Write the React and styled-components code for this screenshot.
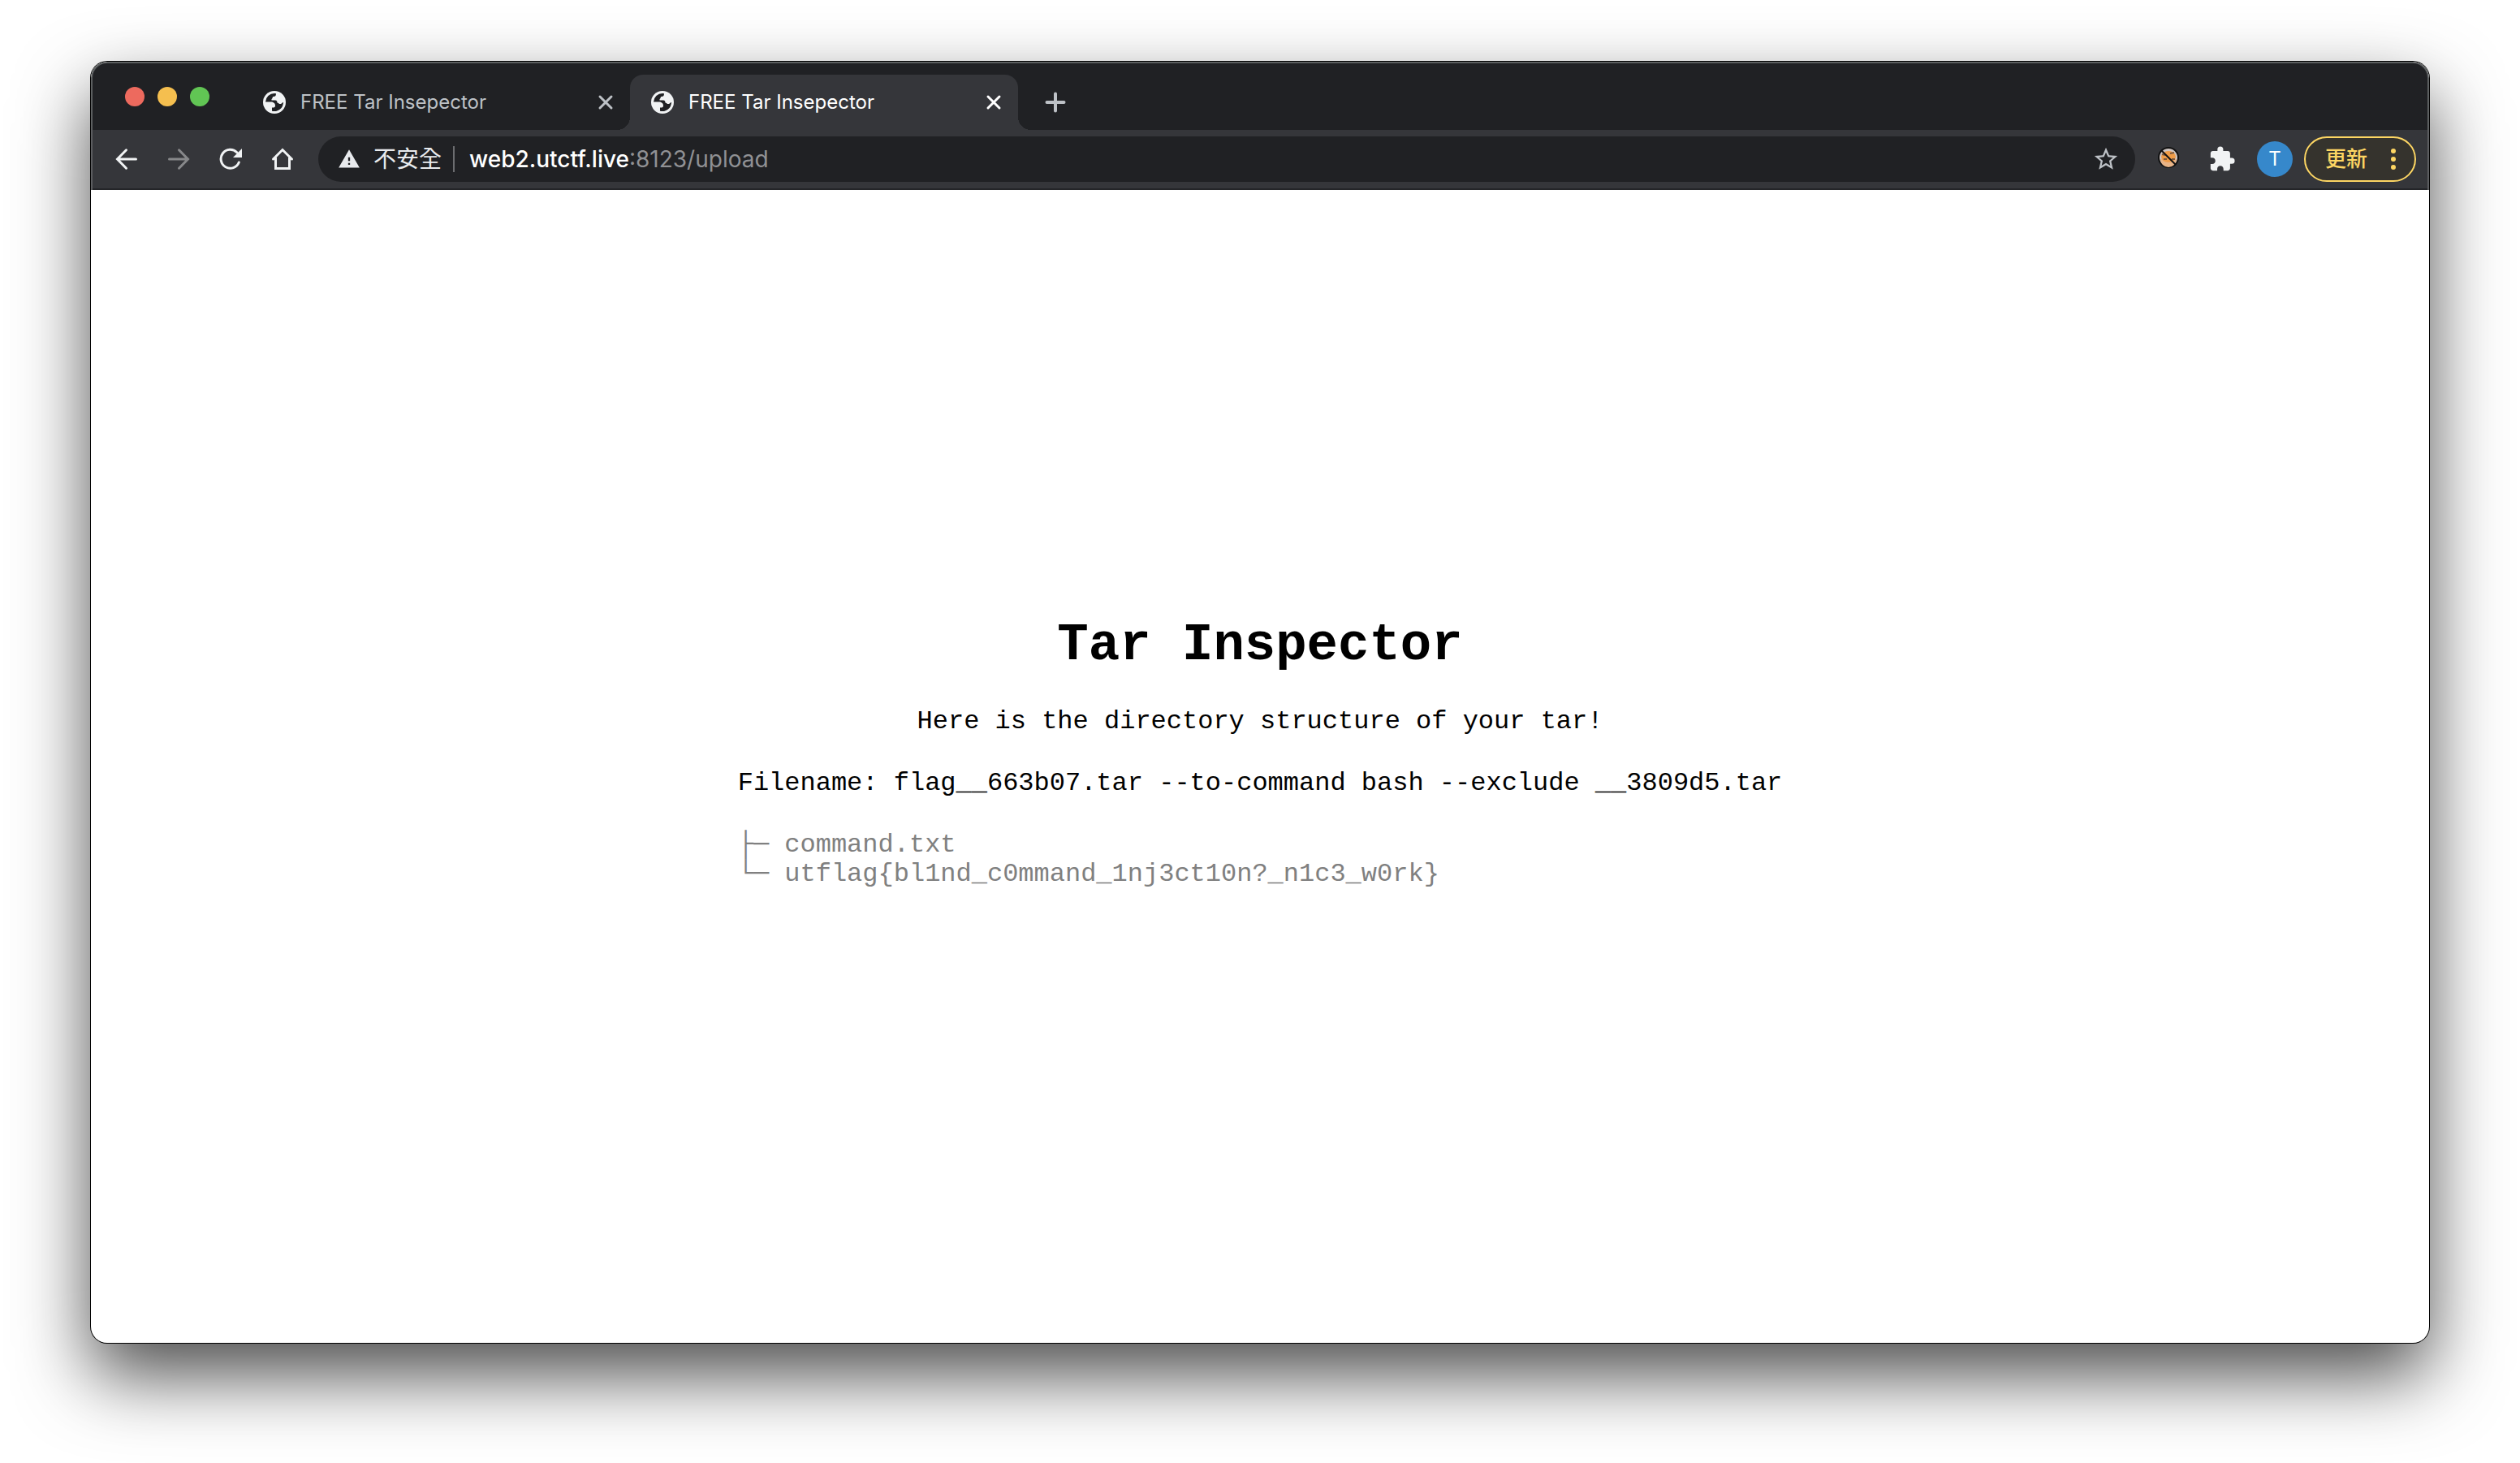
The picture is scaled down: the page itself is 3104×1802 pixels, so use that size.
import React from "react";
import styled, { createGlobalStyle } from "styled-components";
import { MdWarning, MdStarBorder, MdExtension } from "react-icons/md";

const ui = `Inter, "Noto Sans CJK TC", sans-serif`;
const mono = `"Liberation Mono", "Courier New", monospace`;

const GlobalStyle = createGlobalStyle`
  *, *::before, *::after { box-sizing: border-box; }
  body { margin: 0; background: #fff; }
  button { border: 0; padding: 0; background: none; font: inherit; color: inherit; }
`;

const Desktop = styled.div`
  min-height: 100vh;
  padding: 76px 112px 148px;
  display: flex;
  overflow: hidden;
`;

const Window = styled.div`
  flex: 1;
  min-width: 0;
  display: flex;
  flex-direction: column;
  border-radius: 20px;
  overflow: hidden;
  background: #fff;
  font-family: ${ui};
  box-shadow: 0 0 0 1px #000, 0 40px 90px rgba(0, 0, 0, 0.7);
`;

const TabStrip = styled.div`
  display: flex;
  height: 84px;
  padding-left: 40px;
  background: #202124;
  border: 2px solid #5c5f60;
  border-bottom: 0;
  border-radius: 20px 20px 0 0;
`;

const Lights = styled.div`
  display: flex;
  gap: 16px;
  width: 144px;
  padding-top: 29px;
`;

const Light = styled.button`
  width: 24px;
  height: 24px;
  border-radius: 50%;
  background: ${(p) => p.$color};
`;

const Tabs = styled.div`
  display: flex;
  align-items: flex-end;
`;

const Tab = styled.div`
  position: relative;
  display: flex;
  align-items: center;
  width: 478px;
  height: 68px;
  padding: 0 20px 0 26px;
  border-radius: 16px 16px 0 0;
  font-size: 24px;
  line-height: 32px;
  color: ${(p) => (p.$active ? "#fff" : "#bdc1c6")};
  background: ${(p) => (p.$active ? "#35363a" : "transparent")};

  &::before, &::after {
    content: "";
    display: ${(p) => (p.$active ? "block" : "none")};
    position: absolute;
    bottom: 0;
    width: 16px;
    height: 16px;
  }
  &::before {
    right: 100%;
    background: radial-gradient(circle at 0 0, transparent 16px, #35363a 16px);
  }
  &::after {
    left: 100%;
    background: radial-gradient(circle at 100% 0, transparent 16px, #35363a 16px);
  }
`;

const TabTitle = styled.span`
  flex: 1;
  margin-left: 18px;
  white-space: nowrap;
`;

const IconButton = styled.button`
  display: flex;
  align-items: center;
  justify-content: center;
  flex: none;
  width: ${(p) => p.$w || 64}px;
  height: ${(p) => p.$h || 56}px;
  color: ${(p) => p.$color || "#f1f3f4"};
`;

const Toolbar = styled.div`
  display: flex;
  align-items: center;
  height: 74px;
  padding: 0 14px 2px 10px;
  background: #35363a;
  border: solid #5c5d60;
  border-width: 0 2px;
  box-shadow: inset 0 -2px 0 #242528;
`;

const AddressBar = styled.div`
  flex: 1;
  display: flex;
  align-items: center;
  height: 56px;
  margin-left: 12px;
  padding: 0 8px 0 24px;
  border-radius: 28px;
  background: #202124;
  font-size: 28px;
  line-height: 36px;
  color: #e8eaed;
`;

const Security = styled.span`
  margin-left: 16px;
  padding-right: 14px;
  line-height: 32px;
  border-right: 2px solid #6c6d70;
`;

const Address = styled.a`
  flex: 1;
  margin-left: 18px;
  color: #909194;
  text-decoration: none;
`;

const Host = styled.span`
  font-weight: 500;
  color: #fff;
`;

const Actions = styled.div`
  display: flex;
  align-items: center;
  padding-left: 8px;
`;

const Avatar = styled.button`
  width: 44px;
  height: 44px;
  margin: 0 14px 0 10px;
  border-radius: 50%;
  background: #3688cb;
  color: #fff;
  font-size: 24px;
  line-height: 44px;
`;

const Update = styled.button`
  display: flex;
  align-items: center;
  justify-content: space-between;
  width: 138px;
  height: 56px;
  padding: 0 23px 0 24px;
  border: 2px solid #fdd663;
  border-radius: 28px;
  background: #35332d;
  color: #fdd663;
  font-size: 26px;
  font-weight: 500;
  line-height: 36px;
`;

const Page = styled.main`
  flex: 1;
  display: flex;
  flex-direction: column;
  align-items: center;
  justify-content: center;
  gap: 40px;
  font-family: ${mono};
  font-size: 32px;
  line-height: 36px;
  color: #000;
`;

const Title = styled.h1`
  margin: 0;
  font-size: 64px;
  line-height: 72px;
`;

const Text = styled.p`
  margin: 0;
`;

const Listing = styled.section`
  display: flex;
  flex-direction: column;
  gap: 40px;
`;

const Tree = styled.pre`
  margin: 0;
  padding-bottom: 34px;
  font: inherit;
  color: #808080;
`;

const Line = styled.svg.attrs({ fill: "none", stroke: "currentColor", strokeWidth: 3, strokeLinecap: "round", "aria-hidden": true })`
  flex: none;
`;

const ArrowLeft = () => (
  <Line width="28" height="28" viewBox="0 0 28 28">
    <path d="M25.500 14H3M13.500 2.800L2.500 14l11 11.200" />
  </Line>
);

const ArrowRight = () => (
  <Line width="28" height="28" viewBox="0 0 28 28">
    <path d="M2.500 14H25M14.500 2.800L25.500 14l-11 11.200" />
  </Line>
);

const Reload = () => (
  <Line width="28" height="28" viewBox="0 0 28 28">
    <path d="M24.300 18A11.500 11.500 0 1 1 21.800 5.700" />
    <path d="M28 1v11H17z" fill="currentColor" stroke="none" />
  </Line>
);

const Home = () => (
  <Line width="28" height="28" viewBox="0 0 28 28">
    <path d="M2.500 14L14 2.500 25.500 14M5.500 12.500v13h17v-13" />
  </Line>
);

const Cross = () => (
  <Line width="20" height="20" viewBox="0 0 20 20">
    <path d="M3 3l14 14M17 3L3 17" />
  </Line>
);

const Plus = () => (
  <Line width="28" height="28" viewBox="0 0 28 28">
    <path d="M14 3.500v21M3.500 14h21" strokeWidth="4" />
  </Line>
);

const Globe = () => (
  <svg width="28" height="28" viewBox="0 0 28 28" aria-hidden="true">
    <circle cx="14" cy="14" r="14" fill="#f1f3f4" />
    <path d="M3 13.500A11 11 0 0 1 14 3l2 .3c0 3-1 3.700-3.500 3.700-1 0-.5 2.500-2 3v1.500h4.500c2 0 2.500 1.500 2.500 3 2.500.5 1.500 1.500 3.500 1.500 2.500 0 2.500-2 4-2A11 11 0 0 1 11 24.700V20.500h2c1.500 0 2-1 2-2.500 0-3-2.500-4.500-5-4.500z" fill="#202124" />
  </svg>
);

const CookieBlocked = () => (
  <svg width="28" height="32" viewBox="0 0 28 32" aria-hidden="true">
    <circle cx="14" cy="14" r="12" fill="#cfc6c2" stroke="#111" strokeWidth="2" />
    <path d="M4 16a10 10 0 0 0 20 0z" fill="#e8b487" />
    <ellipse cx="14" cy="13" rx="9" ry="7" fill="#ef9c48" />
    <path d="M6 10l4 1M16 9l5-1M8 16h4M18 16h4" stroke="#7a5a40" strokeWidth="2" />
    <path d="M5 5l18 18" stroke="#111" strokeWidth="2" />
  </svg>
);

const Dots = () => (
  <svg width="6" height="26" viewBox="0 0 6 26" fill="currentColor" aria-hidden="true">
    <circle cx="3" cy="3" r="3" />
    <circle cx="3" cy="13" r="3" />
    <circle cx="3" cy="23" r="3" />
  </svg>
);

const tabs = [
  { id: 1, title: "FREE Tar Insepector", active: false },
  { id: 2, title: "FREE Tar Insepector", active: true },
];

const tree = `├─ command.txt
└─ utflag{bl1nd_c0mmand_1nj3ct10n?_n1c3_w0rk}`;

export default function App() {
  return (
    <>
      <GlobalStyle />
      <Desktop>
        <Window>
          <TabStrip>
            <Lights>
              <Light $color="#ed6a5e" aria-label="Close window" />
              <Light $color="#f5bf4f" aria-label="Minimise" />
              <Light $color="#61c554" aria-label="Zoom" />
            </Lights>
            <Tabs>
              {tabs.map((t) => (
                <Tab key={t.id} $active={t.active}>
                  <Globe />
                  <TabTitle>{t.title}</TabTitle>
                  <IconButton $w={20} $h={28} $color={t.active ? "#fff" : "#bdc1c6"} aria-label="Close tab"><Cross /></IconButton>
                </Tab>
              ))}
              <IconButton $w={92} $h={68} $color="#bdc1c6" aria-label="New tab"><Plus /></IconButton>
            </Tabs>
          </TabStrip>
          <Toolbar>
            <IconButton aria-label="Back"><ArrowLeft /></IconButton>
            <IconButton $color="#87888a" aria-label="Forward"><ArrowRight /></IconButton>
            <IconButton aria-label="Reload"><Reload /></IconButton>
            <IconButton aria-label="Home"><Home /></IconButton>
            <AddressBar>
              <MdWarning size={28} />
              <Security>不安全</Security>
              <Address href="#upload"><Host>web2.utctf.live</Host>:8123/upload</Address>
              <IconButton $w={56} $color="#bdc1c6" aria-label="Bookmark"><MdStarBorder size={34} /></IconButton>
            </AddressBar>
            <Actions>
              <IconButton $w={66} aria-label="Cookie blocker"><CookieBlocked /></IconButton>
              <IconButton $w={66} aria-label="Extensions"><MdExtension size={34} /></IconButton>
              <Avatar>T</Avatar>
              <Update>更新<Dots /></Update>
            </Actions>
          </Toolbar>
          <Page>
            <Title>Tar Inspector</Title>
            <Text>Here is the directory structure of your tar!</Text>
            <Listing>
              <Text>Filename: flag__663b07.tar --to-command bash --exclude __3809d5.tar</Text>
              <Tree>{tree}</Tree>
            </Listing>
          </Page>
        </Window>
      </Desktop>
    </>
  );
}
